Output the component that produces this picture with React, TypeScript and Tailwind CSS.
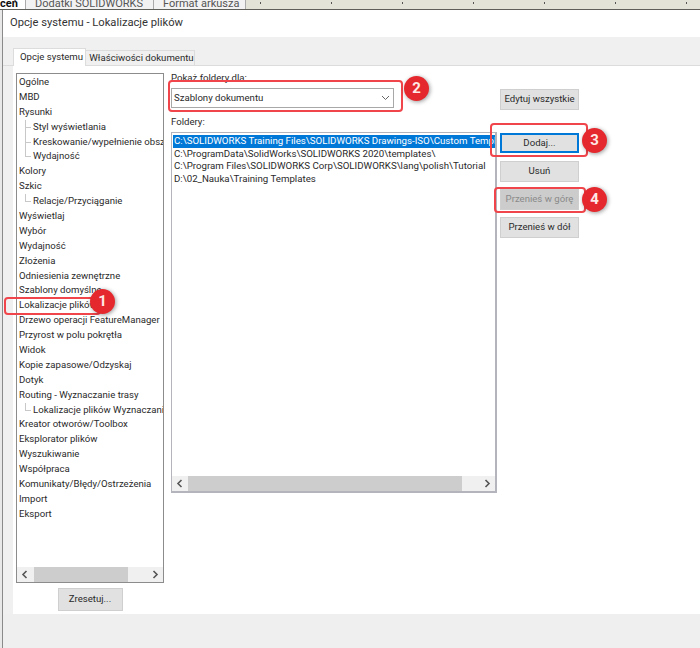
import React from 'react';

const treeItems: { label: string; child?: boolean; last?: boolean }[] = [
  { label: 'Ogólne' },
  { label: 'MBD' },
  { label: 'Rysunki' },
  { label: 'Styl wyświetlania', child: true },
  { label: 'Kreskowanie/wypełnienie obszaru', child: true },
  { label: 'Wydajność', child: true, last: true },
  { label: 'Kolory' },
  { label: 'Szkic' },
  { label: 'Relacje/Przyciąganie', child: true, last: true },
  { label: 'Wyświetlaj' },
  { label: 'Wybór' },
  { label: 'Wydajność' },
  { label: 'Złożenia' },
  { label: 'Odniesienia zewnętrzne' },
  { label: 'Szablony domyślne' },
  { label: 'Lokalizacje plików' },
  { label: 'Drzewo operacji FeatureManager' },
  { label: 'Przyrost w polu pokrętła' },
  { label: 'Widok' },
  { label: 'Kopie zapasowe/Odzyskaj' },
  { label: 'Dotyk' },
  { label: 'Routing - Wyznaczanie trasy' },
  { label: 'Lokalizacje plików Wyznaczanie trasy', child: true, last: true },
  { label: 'Kreator otworów/Toolbox' },
  { label: 'Eksplorator plików' },
  { label: 'Wyszukiwanie' },
  { label: 'Współpraca' },
  { label: 'Komunikaty/Błędy/Ostrzeżenia' },
  { label: 'Import' },
  { label: 'Eksport' },
];

const folders = [
  'C:\\SOLIDWORKS Training Files\\SOLIDWORKS Drawings-ISO\\Custom Templates',
  'C:\\ProgramData\\SolidWorks\\SOLIDWORKS 2020\\templates\\',
  'C:\\Program Files\\SOLIDWORKS Corp\\SOLIDWORKS\\lang\\polish\\Tutorial',
  'D:\\02_Nauka\\Training Templates',
];

const ticks = [260, 331, 402, 473, 544, 615, 686];

function Chevron({ dir }: { dir: 'left' | 'right' }) {
  return (
    <svg width="8" height="9" viewBox="0 0 8 9" fill="none" stroke="#555" strokeWidth="1.6">
      <path d={dir === 'left' ? 'M5.5 1 L2 4.5 L5.5 8' : 'M2.5 1 L6 4.5 L2.5 8'} />
    </svg>
  );
}

function Scrollbar({ thumbLeft, thumbWidth }: { thumbLeft: number; thumbWidth: number }) {
  return (
    <div className="h-[15px] bg-[#f0f0f0] flex items-center justify-between px-[4px] relative shrink-0">
      <Chevron dir="left" />
      <div
        className="absolute top-0 bottom-0 bg-[#cdcdcd]"
        style={{ left: thumbLeft, width: thumbWidth }}
      />
      <Chevron dir="right" />
    </div>
  );
}

function DlgButton({ label, className = '' }: { label: string; className?: string }) {
  return (
    <div className={`flex items-center justify-center whitespace-nowrap ${className}`}>
      {label}
    </div>
  );
}

const btn = 'w-[79px] border border-[#cfcfcf] bg-[#e1e1e1]';

function Badge({ n, className }: { n: number; className: string }) {
  return (
    <div
      className={`absolute w-[25px] h-[25px] rounded-full bg-[#e5282d] text-[#ffe9e6] text-[15px] font-bold flex items-center justify-center shadow-[1px_1px_4px_rgba(0,0,0,0.4)] ${className}`}
    >
      {n}
    </div>
  );
}

function Callout({ className }: { className: string }) {
  return <div className={`absolute rounded-[4px] border-2 border-[#f0454b] ${className}`} />;
}

export default function App() {
  return (
    <div className="relative w-[700px] h-[648px] overflow-hidden flex flex-col bg-[#f0f0f0] text-[#2a2a2a] text-[9.6px] font-['Roboto',sans-serif]">
      {/* Host window ribbon */}
      <div className="h-[10px] shrink-0 flex relative bg-[#e4e3d7] border-b border-[#5f5e59] text-[11px] leading-[8px] text-[#555] overflow-hidden">
        <div className="w-[26px] h-[10px] bg-white border-r border-[#aaa] font-bold text-[#111] text-right pr-[8px]">ceń</div>
        <div className="w-[128px] h-[10px] bg-[#f2f2f2] border-r border-[#aaa] pl-[9px] whitespace-nowrap">Dodatki SOLIDWORKS</div>
        <div className="w-[92px] h-[10px] bg-[#f2f2f2] border-r border-[#aaa] pl-[9px] whitespace-nowrap">Format arkusza</div>
        {ticks.map((x) => (
          <div key={x} className="absolute top-[2px] w-px h-[2px] bg-[#555]" style={{ left: x }} />
        ))}
      </div>

      <div className="flex-1 flex min-h-0">
        <div className="w-[3px] shrink-0 bg-[#e8e8e8] border-r border-[#8a8a8a]" />

        {/* Dialog */}
        <div className="flex-1 flex flex-col min-w-0">
          <div className="h-[27px] shrink-0 bg-white flex items-center pl-[7px] text-[11.2px] text-[#333]">
            Opcje systemu - Lokalizacje plików
          </div>

          <div className="h-[29px] shrink-0 bg-[#f0f0f0] flex items-end pl-[10px] border-b border-[#dcdcdc]">
            <div className="w-[73px] h-[18px] bg-white border border-b-0 border-[#dcdcdc] flex items-center justify-center pl-[4px] -mb-px relative whitespace-nowrap">
              Opcje systemu
            </div>
            <div className="w-[109px] h-[15px] bg-[#f0f0f0] border border-b-0 border-l-0 border-[#dcdcdc] flex items-center justify-center pl-[3px] whitespace-nowrap">
              Właściwości dokumentu
            </div>
          </div>

          <div className="flex-1 flex ml-[10px] bg-white min-h-0">
            {/* Tree column */}
            <div className="w-[148px] ml-[3px] mt-[7px] flex flex-col items-center shrink-0">
              <div className="w-full h-[510px] border border-[#8c8c8c] bg-white flex flex-col overflow-hidden">
                <div className="flex-1 pt-[1px] overflow-hidden">
                  {treeItems.map((item, i) => (
                    <div key={i} className={`h-[14.9px] leading-[14.9px] whitespace-nowrap relative ${item.child ? 'pl-[16px]' : 'pl-[2px]'}`}>
                      {item.child && (
                        <>
                          <span className={`absolute left-[8px] top-0 w-px bg-[#c8c8c8] ${item.last ? 'h-[8px]' : 'h-full'}`} />
                          <span className="absolute left-[8px] top-[7px] w-[6px] h-px bg-[#c8c8c8]" />
                        </>
                      )}
                      {item.label}
                    </div>
                  ))}
                </div>
                <Scrollbar thumbLeft={17} thumbWidth={94} />
              </div>
              <DlgButton label="Zresetuj..." className="w-[65px] h-[23px] mt-[5px] border border-[#cfcfcf] bg-[#e1e1e1]" />
            </div>

            {/* Folder column */}
            <div className="w-[326px] ml-[7px] shrink-0 flex flex-col">
              <div className="h-[14px] mt-[5px] leading-[14px]">Pokaż foldery dla:</div>
              <div className="h-[20px] mt-[3px] w-[223px] border border-[#a8a8a8] bg-white flex items-center justify-between pl-[2px] pr-[3px]">
                <span>Szablony dokumentu</span>
                <svg width="9" height="6" viewBox="0 0 9 6" fill="none" stroke="#666" strokeWidth="1">
                  <path d="M1 1 L4.5 4.5 L8 1" />
                </svg>
              </div>
              <div className="h-[14px] mt-[7px] leading-[14px]">Foldery:</div>
              <div className="h-[361px] mt-[3px] border border-[#b4b4bc] border-r-2 border-b-2 bg-white flex flex-col overflow-hidden">
                <div className="flex-1 pt-[2px] pl-[1px] overflow-hidden text-[9.7px]">
                  {folders.map((f, i) => (
                    <div
                      key={f}
                      className={`h-[12.7px] leading-[12.7px] whitespace-nowrap pl-[1px] ${i === 0 ? 'bg-[#0078d7] text-white' : ''}`}
                    >
                      {f}
                    </div>
                  ))}
                </div>
                <Scrollbar thumbLeft={16} thumbWidth={274} />
              </div>
            </div>

            {/* Buttons column */}
            <div className="ml-[3px] pt-[23px] flex flex-col shrink-0">
              <DlgButton label="Edytuj wszystkie" className={`${btn} h-[21px]`} />
              <DlgButton label="Dodaj..." className="w-[79px] h-[20px] mt-[23px] bg-[#e1e1e1] border-2 border-[#0078d7]" />
              <DlgButton label="Usuń" className={`${btn} h-[21px] mt-[8px]`} />
              <DlgButton label="Przenieś w górę" className="w-[79px] h-[21px] mt-[7px] border border-[#cfcfcf] bg-[#cccccc] text-[#8a8a8a]" />
              <DlgButton label="Przenieś w dół" className={`${btn} h-[21px] mt-[7px]`} />
            </div>
          </div>

          <div className="h-[34px] shrink-0 bg-[#efefef]" />
        </div>
      </div>

      {/* Red tutorial annotations */}
      <Callout className="left-[4px] top-[297px] w-[97px] h-[18px]" />
      <Badge n={1} className="left-[90px] top-[289px]" />
      <Callout className="left-[168px] top-[80px] w-[235px] h-[32px]" />
      <Badge n={2} className="left-[404px] top-[76px]" />
      <Callout className="left-[490px] top-[123px] w-[98px] h-[34px]" />
      <Badge n={3} className="left-[582px] top-[128px]" />
      <Callout className="left-[494px] top-[187px] w-[92px] h-[26px]" />
      <Badge n={4} className="left-[582px] top-[187px]" />
    </div>
  );
}
